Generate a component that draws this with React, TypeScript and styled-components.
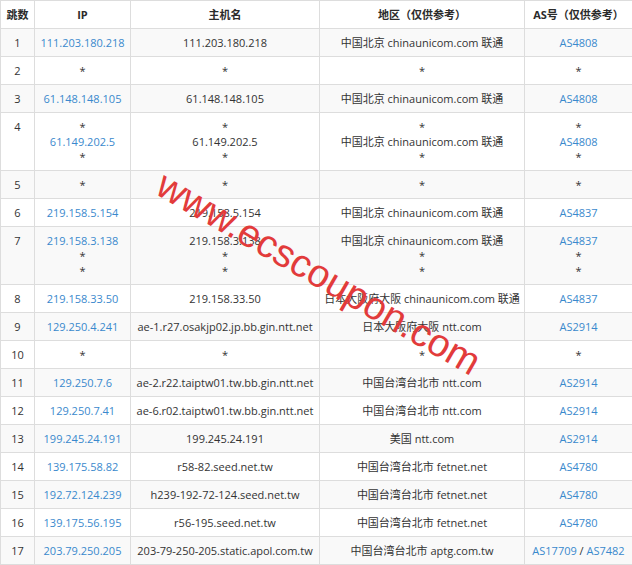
import React from "react";
import styled, { createGlobalStyle } from "styled-components";

const GlobalStyle = createGlobalStyle`
  html, body {
    margin: 0;
    padding: 0;
    background: #ffffff;
  }
`;

const Page = styled.div`
  position: relative;
  width: 632px;
  height: 565px;
  overflow: hidden;
  font-family: "Open Sans", "Noto Sans CJK SC", sans-serif;
  font-size: 11px;
  color: #333333;
`;

const Table = styled.table`
  width: 632px;
  border-collapse: collapse;
  table-layout: fixed;
`;

const HeadCell = styled.th`
  border: 1px solid #dddddd;
  padding: 6px 2px;
  line-height: 15px;
  font-weight: bold;
  text-align: center;
  color: #2b2b2b;
  background: #ffffff;
  white-space: nowrap;
`;

const Row = styled.tr<{ $odd: boolean }>`
  background: ${(p) => (p.$odd ? "#f9f9f9" : "#ffffff")};
`;

const Cell = styled.td`
  border: 1px solid #dddddd;
  padding: 6px 2px;
  line-height: 15px;
  text-align: center;
  vertical-align: top;
  white-space: nowrap;
`;

const Link = styled.span`
  color: #3a89cd;
`;

const Watermark = styled.span`
  position: absolute;
  left: 319px;
  top: 273px;
  transform: translate(-50%, -50%) rotate(30deg);
  font-family: "Liberation Sans", Arial, sans-serif;
  font-size: 39px;
  line-height: 1;
  color: #e23b3b;
  white-space: nowrap;
  pointer-events: none;
`;

type Hop = {
  ip: string[];
  host: string[];
  area: string[];
  as: string[];
};

const CN = "中国北京 chinaunicom.com 联通";
const TW = "中国台湾台北市";

const hops: Hop[] = [
  { ip: ["111.203.180.218"], host: ["111.203.180.218"], area: [CN], as: ["AS4808"] },
  { ip: ["*"], host: ["*"], area: ["*"], as: ["*"] },
  { ip: ["61.148.148.105"], host: ["61.148.148.105"], area: [CN], as: ["AS4808"] },
  {
    ip: ["*", "61.149.202.5", "*"],
    host: ["*", "61.149.202.5", "*"],
    area: ["*", CN, "*"],
    as: ["*", "AS4808", "*"],
  },
  { ip: ["*"], host: ["*"], area: ["*"], as: ["*"] },
  { ip: ["219.158.5.154"], host: ["219.158.5.154"], area: [CN], as: ["AS4837"] },
  {
    ip: ["219.158.3.138", "*", "*"],
    host: ["219.158.3.138", "*", "*"],
    area: [CN, "*", "*"],
    as: ["AS4837", "*", "*"],
  },
  { ip: ["219.158.33.50"], host: ["219.158.33.50"], area: ["日本大阪府大阪 chinaunicom.com 联通"], as: ["AS4837"] },
  { ip: ["129.250.4.241"], host: ["ae-1.r27.osakjp02.jp.bb.gin.ntt.net"], area: ["日本大阪府大阪 ntt.com"], as: ["AS2914"] },
  { ip: ["*"], host: ["*"], area: ["*"], as: ["*"] },
  { ip: ["129.250.7.6"], host: ["ae-2.r22.taiptw01.tw.bb.gin.ntt.net"], area: [TW + " ntt.com"], as: ["AS2914"] },
  { ip: ["129.250.7.41"], host: ["ae-6.r02.taiptw01.tw.bb.gin.ntt.net"], area: [TW + " ntt.com"], as: ["AS2914"] },
  { ip: ["199.245.24.191"], host: ["199.245.24.191"], area: ["美国 ntt.com"], as: ["AS2914"] },
  { ip: ["139.175.58.82"], host: ["r58-82.seed.net.tw"], area: [TW + " fetnet.net"], as: ["AS4780"] },
  { ip: ["192.72.124.239"], host: ["h239-192-72-124.seed.net.tw"], area: [TW + " fetnet.net"], as: ["AS4780"] },
  { ip: ["139.175.56.195"], host: ["r56-195.seed.net.tw"], area: [TW + " fetnet.net"], as: ["AS4780"] },
  {
    ip: ["203.79.250.205"],
    host: ["203-79-250-205.static.apol.com.tw"],
    area: [TW + " aptg.com.tw"],
    as: ["AS17709 / AS7482"],
  },
];

// stars stay plain text, everything else in the ip / as columns is a link
const linked = (line: string) => {
  if (line === "*") return line;
  const parts = line.split(" / ");
  return parts.map((p, i) => (
    <React.Fragment key={i}>
      {i > 0 && " / "}
      <Link>{p}</Link>
    </React.Fragment>
  ));
};

const Lines = ({ lines, link }: { lines: string[]; link?: boolean }) => (
  <>
    {lines.map((l, i) => (
      <React.Fragment key={i}>
        {i > 0 && <br />}
        {link ? linked(l) : l}
      </React.Fragment>
    ))}
  </>
);

const App = () => {
  return (
    <Page>
      <GlobalStyle />
      <Table>
        <colgroup>
          <col style={{ width: 34 }} />
          <col style={{ width: 96 }} />
          <col style={{ width: 189 }} />
          <col style={{ width: 205 }} />
          <col style={{ width: 108 }} />
        </colgroup>
        <thead>
          <tr>
            <HeadCell>跳数</HeadCell>
            <HeadCell>IP</HeadCell>
            <HeadCell>主机名</HeadCell>
            <HeadCell>地区（仅供参考）</HeadCell>
            <HeadCell>AS号（仅供参考）</HeadCell>
          </tr>
        </thead>
        <tbody>
          {hops.map((h, i) => (
            <Row key={i} $odd={i % 2 === 0}>
              <Cell>{i + 1}</Cell>
              <Cell>
                <Lines lines={h.ip} link />
              </Cell>
              <Cell>
                <Lines lines={h.host} />
              </Cell>
              <Cell>
                <Lines lines={h.area} />
              </Cell>
              <Cell>
                <Lines lines={h.as} link />
              </Cell>
            </Row>
          ))}
        </tbody>
      </Table>
      <Watermark>www.ecscoupon.com</Watermark>
    </Page>
  );
};

export default App;
